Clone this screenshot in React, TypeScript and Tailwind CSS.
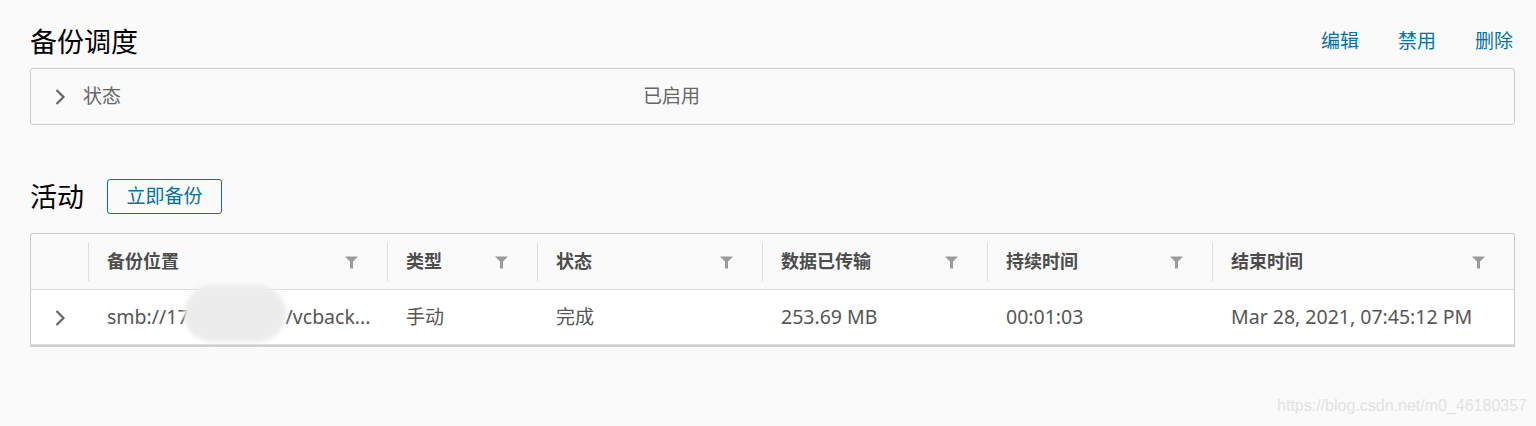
import React from "react";

const FONT = { fontFamily: '"Noto Sans", "Noto Sans CJK SC", sans-serif' };

function Chevron() {
  return (
    <svg width="14" height="18" viewBox="0 0 14 18" className="text-[#666]">
      <path d="M3.5 2 L10.5 9 L3.5 16" fill="none" stroke="currentColor" strokeWidth="2.2" />
    </svg>
  );
}

function Filter() {
  return (
    <svg width="13" height="13" viewBox="0 0 13 13">
      <path d="M0 0.5 H13 L8 5.5 V12.5 H5 V5.5 Z" fill="#9a9a9a" />
    </svg>
  );
}

const cols = [
  { label: "备份位置", w: "w-[299px]" },
  { label: "类型", w: "w-[150px]" },
  { label: "状态", w: "w-[225px]" },
  { label: "数据已传输", w: "w-[225px]" },
  { label: "持续时间", w: "w-[225px]" },
  { label: "结束时间", w: "flex-1" },
];

export default function App() {
  return (
    <div className="relative min-h-[426px] bg-[#fafafa] pl-[30px] pr-[21px] pt-[24px]" style={FONT}>
      <div className="flex h-[34px] items-center justify-between">
        <h1 className="text-[27px] leading-none text-black">备份调度</h1>
        <div className="flex gap-[39px] pr-[2px] text-[19px] text-[#0072a3]">
          <span>编辑</span>
          <span>禁用</span>
          <span>删除</span>
        </div>
      </div>

      <div className="mt-[10px] flex h-[57px] items-center rounded-[3px] border border-[#cccccc] text-[19px] text-[#666]">
        <div className="ml-[22px] flex w-[30px] items-center">
          <Chevron />
        </div>
        <span className="w-[560px]">状态</span>
        <span>已启用</span>
      </div>

      <div className="mt-[54px] flex h-[35px] items-center gap-[23px]">
        <h2 className="text-[27px] leading-none text-black">活动</h2>
        <button className="h-[35px] w-[115px] rounded-[3px] border border-[#0072a3] text-[19px] text-[#0072a3]">
          立即备份
        </button>
      </div>

      <div className="mt-[19px] overflow-hidden rounded-t-[3px] border border-b-[2px] border-[#cccccc] border-b-[#d0d0d0]">
        <div className="flex h-[56px] items-center border-b border-[#dddddd] bg-[#fafafa] text-[18px] font-bold text-[#4d4d4d]">
          <div className="w-[57px]" />
          {cols.map((c) => (
            <div key={c.label} className={`${c.w} flex h-full items-center`}>
              <div className="h-[38px] w-px bg-[#dddddd]" />
              <span className="ml-[18px] flex-1">{c.label}</span>
              <span className="mr-[29px] flex items-center pt-[2px]">
                <Filter />
              </span>
            </div>
          ))}
        </div>
        <div className="flex h-[55px] items-center border-b border-[#dddddd] bg-white text-[19.5px] text-[#565656]">
          <div className="flex w-[57px] items-center pl-[22px] pt-[2px]">
            <Chevron />
          </div>
          <div className="flex w-[299px] items-center pl-[19px]">
            <span>smb://17</span>
            <span className="relative ml-[-5px] inline-block h-[20px] w-[102px]">
              <span className="absolute -top-[22px] left-0 h-[57px] w-[102px] rounded-[28px] bg-[#ececec] blur-[2px]" />
            </span>
            <span>/vcback...</span>
          </div>
          <div className="w-[150px] pl-[19px] text-[19px]">手动</div>
          <div className="w-[225px] pl-[19px] text-[19px]">完成</div>
          <div className="w-[225px] pl-[19px]">253.69 MB</div>
          <div className="w-[225px] pl-[19px]">00:01:03</div>
          <div className="flex-1 pl-[19px]">Mar 28, 2021, 07:45:12 PM</div>
        </div>
      </div>

      <div
        className="mt-[47px] text-right text-[16px] text-[#e2e2e2]"
        style={{ fontFamily: '"Liberation Sans", Arial, sans-serif' }}
      >
        <span className="mr-[-12px]">https://blog.csdn.net/m0_46180357</span>
      </div>
    </div>
  );
}
